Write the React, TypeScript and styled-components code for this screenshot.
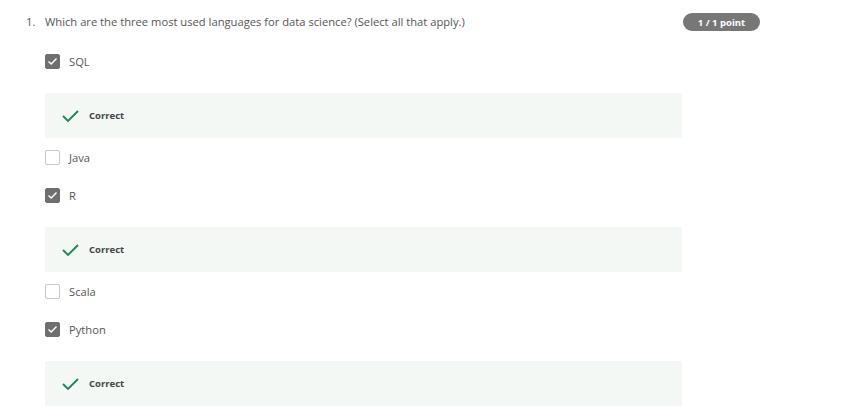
import styled, { createGlobalStyle } from 'styled-components';

const GlobalStyle = createGlobalStyle`
  body {
    margin: 0;
    background: #fff;
    font-family: 'Open Sans', 'Liberation Sans', sans-serif;
    color: #373a3c;
  }
`;

const Wrapper = styled.div`
  width: 841px;
  padding: 11px 0 0 26px;
  box-sizing: border-box;
`;
const Header = styled.div`
  display: flex;
  align-items: center;
  width: 734px;
  height: 20px;
`;
const Number = styled.span`
  width: 19px;
  font-size: 11.2px;
  color: #555;
`;
const Question = styled.span`
  flex: 1;
  font-size: 11.2px;
  color: #555;
`;
const Badge = styled.span`
  width: 77px;
  height: 18px;
  margin-top: 2px;
  border-radius: 9px;
  background: #777;
  color: #fff;
  font-size: 9.5px;
  font-weight: 700;
  display: flex;
  align-items: center;
  justify-content: center;
`;
const Options = styled.div`
  padding: 11px 0 0 19px;
  display: flex;
  flex-direction: column;
`;
const Option = styled.label`
  display: flex;
  align-items: center;
  height: 38px;
  font-size: 11.2px;
  color: #555;
`;
const Box = styled.span<{ $checked: boolean }>`
  width: 15px;
  height: 15px;
  box-sizing: border-box;
  border-radius: 2px;
  margin-right: 9px;
  display: flex;
  align-items: center;
  justify-content: center;
  background: ${(p) => (p.$checked ? '#6f6f6f' : '#fff')};
  border: 1px solid ${(p) => (p.$checked ? '#6f6f6f' : '#c8c8c8')};
`;
const Feedback = styled.div`
  margin: 13px 0 0;
  width: 637px;
  height: 45px;
  background: #f3f8f5;
  display: flex;
  align-items: center;
  padding-left: 17px;
  box-sizing: border-box;
  font-size: 9.5px;
  font-weight: 700;
  color: #444;
  svg {
    margin-right: 10px;
  }
`;

const options = [
  { label: 'SQL', checked: true },
  { label: 'Java', checked: false },
  { label: 'R', checked: true },
  { label: 'Scala', checked: false },
  { label: 'Python', checked: true },
];

function Tick() {
  return (
    <svg width="11" height="9" viewBox="0 0 11 9">
      <path d="M1.5 4.5 L4.2 7 L9.5 1.5" fill="none" stroke="#fff" strokeWidth="1.4" />
    </svg>
  );
}

function GreenCheck() {
  return (
    <svg width="17" height="12" viewBox="0 0 17 12">
      <path d="M1 6 L6 11 L16 1" fill="none" stroke="#1f8354" strokeWidth="1.8" />
    </svg>
  );
}

export default function App() {
  return (
    <Wrapper>
      <GlobalStyle />
      <Header>
        <Number>1.</Number>
        <Question>Which are the three most used languages for data science? (Select all that apply.)</Question>
        <Badge>1 / 1 point</Badge>
      </Header>
      <Options>
        {options.map((o) => (
          <div key={o.label}>
            <Option>
              <Box $checked={o.checked}>{o.checked && <Tick />}</Box>
              {o.label}
            </Option>
            {o.checked && (
              <Feedback>
                <GreenCheck />
                Correct
              </Feedback>
            )}
          </div>
        ))}
      </Options>
    </Wrapper>
  );
}
